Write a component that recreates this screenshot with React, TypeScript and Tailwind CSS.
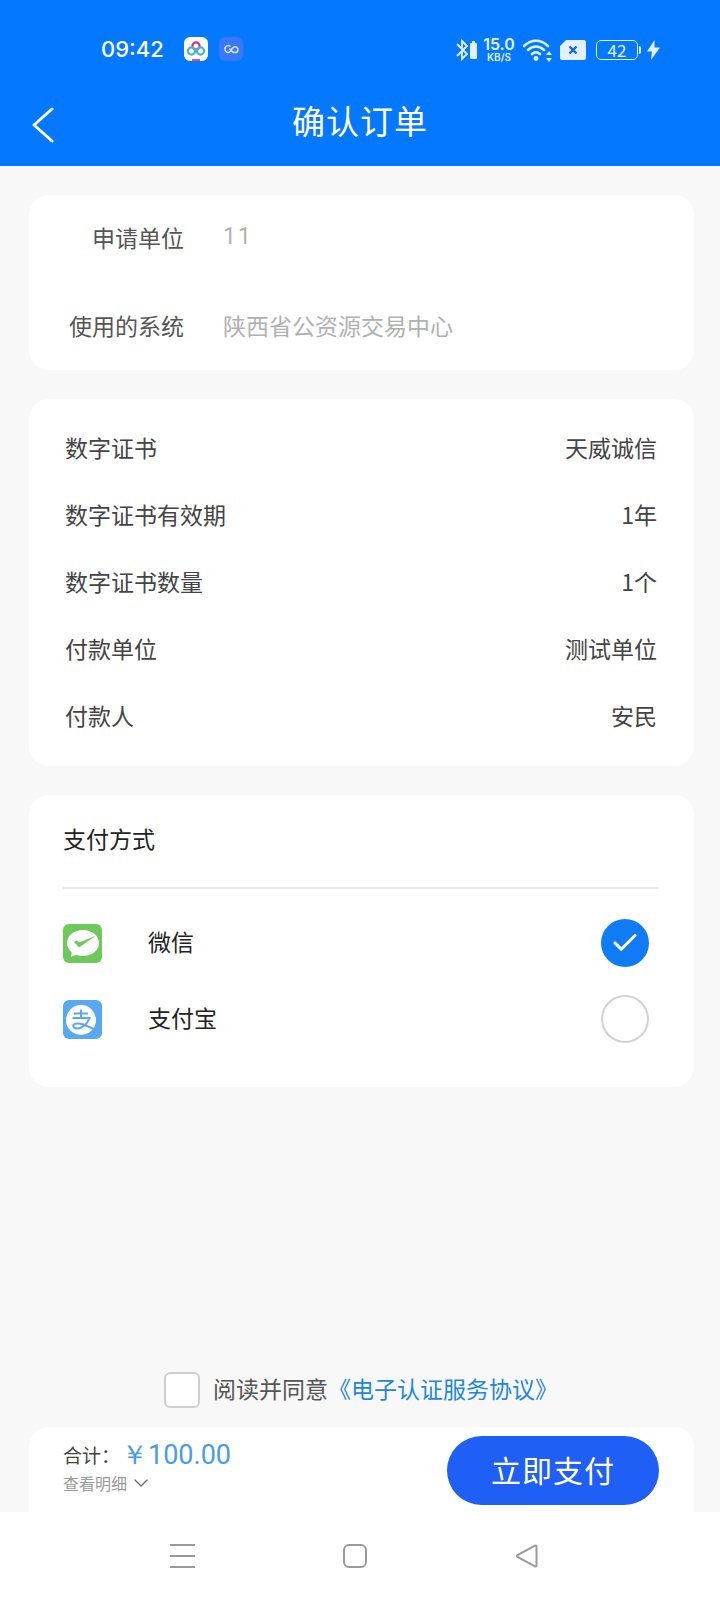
import { Check, ChevronDown } from 'lucide-react';

const FONT = "font-['Noto_Sans_CJK_SC','Noto_Sans',sans-serif]";

const ORDER_ROWS = [
  ['数字证书', '天威诚信'],
  ['数字证书有效期', '1年'],
  ['数字证书数量', '1个'],
  ['付款单位', '测试单位'],
  ['付款人', '安民'],
];

function StatusBar() {
  return (
    <div className="flex h-[76px] items-end justify-between pb-[13px] pl-[101px] pr-[60px] text-white">
      <div className="flex items-center">
        <span className="w-[70px] font-['Inter',sans-serif] text-[22px] leading-[28px] font-medium">09:42</span>
        <svg width="24" height="24" viewBox="0 0 24 24" className="ml-[13px]">
          <rect width="24" height="24" rx="6" fill="#fff" />
          <circle cx="12" cy="9" r="3.6" fill="none" stroke="#d8336f" strokeWidth="2.2" />
          <circle cx="7.5" cy="14" r="3.6" fill="none" stroke="#45b4d8" strokeWidth="2.2" />
          <circle cx="16.5" cy="14" r="3.6" fill="none" stroke="#45b4d8" strokeWidth="2.2" />
          <rect x="8" y="22" width="8" height="2" fill="#e0507f" />
        </svg>
        <svg width="24" height="24" viewBox="0 0 24 24" className="ml-[11px]">
          <rect width="24" height="24" rx="6" fill="#3a78f5" />
          <path d="M11 9.2a3.3 3.3 0 1 0 0 5.6M11 14.8c2 -3 3 -5 5-5a2.9 2.9 0 0 1 0 5.8c-2 0-3-.8-5-3.6" fill="none" stroke="#d5e4ff" strokeWidth="1.5" strokeLinecap="round" />
        </svg>
      </div>
      <div className="flex items-center">
        <svg width="24" height="26" viewBox="0 0 24 26">
          <path d="M2 7l10 10-5 5V4l5 5L2 19" fill="none" stroke="#e3f0ff" strokeWidth="1.8" />
          <rect x="15" y="6" width="7" height="16" rx="1.2" fill="#e3f0ff" />
          <rect x="17" y="4" width="3" height="2" fill="#e3f0ff" />
        </svg>
        <div className="ml-[3px] flex w-[34px] flex-col items-center font-['Inter',sans-serif] font-semibold text-[#e3f0ff]">
          <span className="text-[16px] leading-[16px]">15.0</span>
          <span className="text-[10px] leading-[11px]">KB/S</span>
        </div>
        <svg width="30" height="26" viewBox="0 0 30 26" className="ml-[7px]">
          <path d="M1 9c7-7 17-7 24 0M5 13c5-4.500 11-4.500 16 0M9 17c3-2.500 5-2.500 8 0" fill="none" stroke="#e3f0ff" strokeWidth="2.6" strokeLinecap="round" />
          <circle cx="13" cy="21.500" r="2.400" fill="#e3f0ff" />
          <path d="M26 14l3 4h-6zM26 25l3-4h-6z" fill="#e3f0ff" />
        </svg>
        <svg width="26" height="20" viewBox="0 0 26 20" className="ml-[7px]">
          <path d="M6 0h18a2 2 0 0 1 2 2v16a2 2 0 0 1-2 2H2a2 2 0 0 1-2-2V6z" fill="#e3f0ff" />
          <path d="M9.500 6.500l7 7M16.500 6.500l-7 7" stroke="#1a66d8" strokeWidth="2.400" />
        </svg>
        <div className="ml-[10px] flex h-[20px] w-[42px] items-center justify-center rounded-[5px] border border-[#e3f0ff] text-[17px] leading-none text-[#e3f0ff]">
          42
        </div>
        <div className="ml-px h-[8px] w-[2px] rounded-r bg-[#e3f0ff]" />
        <svg width="13" height="20" viewBox="0 0 13 20" className="ml-[6px]">
          <path d="M7.500 0L0 11.500h5L4 20l9-12.500H7.500z" fill="#e3f0ff" />
        </svg>
      </div>
    </div>
  );
}

function WechatIcon() {
  return (
    <svg width="39" height="39" viewBox="0 0 39 39">
      <rect width="39" height="39" rx="6" fill="#6cc95a" />
      <ellipse cx="20" cy="19" rx="16" ry="13" fill="#fff" />
      <path d="M9 27l-1 6 7-3z" fill="#fff" />
      <path d="M11 18l5 5.500L33 11.500l-16.500 7-3-2z" fill="#6cc95a" />
    </svg>
  );
}

function AlipayIcon() {
  return (
    <svg width="39" height="39" viewBox="0 0 39 39">
      <rect width="39" height="39" rx="6" fill="#58a8f2" />
      <circle cx="18" cy="20" r="15" fill="#fff" />
      <path d="M11 13.500h14M18 9.500v8M9.500 18h17c-2 6-8 10.500-12 10.500-3 0-5-1.500-4-3.500 1.500-3 9-2 22 5" fill="none" stroke="#58a8f2" strokeWidth="2" />
    </svg>
  );
}

function PayOption({ label, checked, icon }: { label: string; checked?: boolean; icon: React.ReactNode }) {
  return (
    <div className="flex h-[48px] items-center">
      {icon}
      <span className="ml-[46px] flex-1 pb-[4px] text-[23px] text-[#222]">{label}</span>
      {checked ? (
        <span className="mr-[10px] flex h-[48px] w-[48px] items-center justify-center rounded-full bg-[#0f7cf5] text-white">
          <Check size={30} strokeWidth={2.5} />
        </span>
      ) : (
        <span className="mr-[10px] h-[48px] w-[48px] rounded-full border-2 border-[#d2d2d2]" />
      )}
    </div>
  );
}

export default function App() {
  return (
    <div className={`${FONT} flex h-[1600px] w-[720px] flex-col bg-[#f8f8f8]`}>
      <header className="h-[166px] bg-[#0479ff]">
        <StatusBar />
        <div className="relative flex h-[90px] items-center justify-center text-white">
          <svg width="24" height="36" viewBox="0 0 24 36" className="absolute left-[31px] top-[31px]">
            <path d="M21 2L3 18l18 16" fill="none" stroke="#fff" strokeWidth="3" strokeLinecap="round" strokeLinejoin="round" />
          </svg>
          <h1 className="text-[33px] font-normal tracking-[1px]">确认订单</h1>
        </div>
      </header>

      <main className="flex flex-1 flex-col pl-[29px] pr-[26px] pt-[29px]">
        <section className="h-[175px] rounded-[20px] bg-white pt-[16px] text-[23px]">
          <div className="flex h-[52px] items-center">
            <span className="w-[155px] text-right text-[#555]">申请单位</span>
            <span className="ml-[39px] font-['Roboto',sans-serif] tracking-[2px] text-[#b0b0b0]">11</span>
          </div>
          <div className="mt-[36px] flex h-[52px] items-center">
            <span className="w-[155px] text-right text-[#555]">使用的系统</span>
            <span className="ml-[39px] text-[#b0b0b0]">陕西省公资源交易中心</span>
          </div>
        </section>

        <section className="mt-[29px] h-[367px] rounded-[20px] bg-white pl-[36px] pr-[37px] pt-[15px] text-[23px] text-[#444]">
          {ORDER_ROWS.map(([label, value]) => (
            <div key={label} className="flex h-[67px] items-center justify-between">
              <span>{label}</span>
              <span>{value}</span>
            </div>
          ))}
        </section>

        <section className="mt-[29px] h-[292px] rounded-[20px] bg-white pl-[34px] pr-[35px]">
          <div className="flex h-[94px] items-center border-b-2 border-[#eaeaea] pb-[6px] text-[23px] text-[#222]">支付方式</div>
          <div className="flex flex-col gap-[28px] pt-[30px]">
            <PayOption label="微信" checked icon={<WechatIcon />} />
            <PayOption label="支付宝" icon={<AlipayIcon />} />
          </div>
        </section>

        <div className="mt-auto flex h-[36px] items-center pl-[135px] text-[23px]">
          <span className="h-[36px] w-[36px] rounded-[6px] border-2 border-[#cfcfcf] bg-white" />
          <span className="ml-[13px] pb-[4px] text-[#555]">阅读并同意</span>
          <span className="pb-[4px] text-[#1f87db]">《电子认证服务协议》</span>
        </div>

        <footer className="mt-[19px] flex h-[85px] items-center justify-between rounded-t-[20px] bg-white pl-[34px] pr-[35px]">
          <div className="-mt-[4px] flex flex-col">
            <div className="flex h-[30px] items-center">
              <span className="w-[58px] text-[19px] text-[#444]">合计：</span>
              <span className="font-['Roboto',sans-serif] text-[27px] text-[#4a9ce0]">￥100.00</span>
            </div>
            <div className="flex items-center text-[16px] leading-[24px] text-[#9a9a9a]">
              查看明细
              <ChevronDown size={24} strokeWidth={1.3} className="ml-[2px] text-[#666]" />
            </div>
          </div>
          <button className="mt-[2px] h-[69px] w-[212px] rounded-full bg-[#1f5ff5] pb-[2px] text-[30px] tracking-[1px] text-white">立即支付</button>
        </footer>
      </main>

      <nav className="flex h-[88px] items-start bg-white pt-[32px] text-[#999]">
        <div className="ml-[170px] flex h-[24px] w-[25px] flex-col justify-between">
          <span className="h-[2px] bg-[#999]" />
          <span className="h-[2px] bg-[#999]" />
          <span className="h-[2px] bg-[#999]" />
        </div>
        <span className="ml-[148px] h-[24px] w-[24px] rounded-[6px] border-2 border-[#999]" />
        <svg width="24" height="24" viewBox="0 0 24 24" className="ml-[148px]">
          <path d="M21.500 2.500v19a1 1 0 0 1-1.500.8L2.500 13a1.200 1.200 0 0 1 0-2L20 1.700a1 1 0 0 1 1.500.8z" fill="none" stroke="#999" strokeWidth="2" />
        </svg>
      </nav>
    </div>
  );
}
